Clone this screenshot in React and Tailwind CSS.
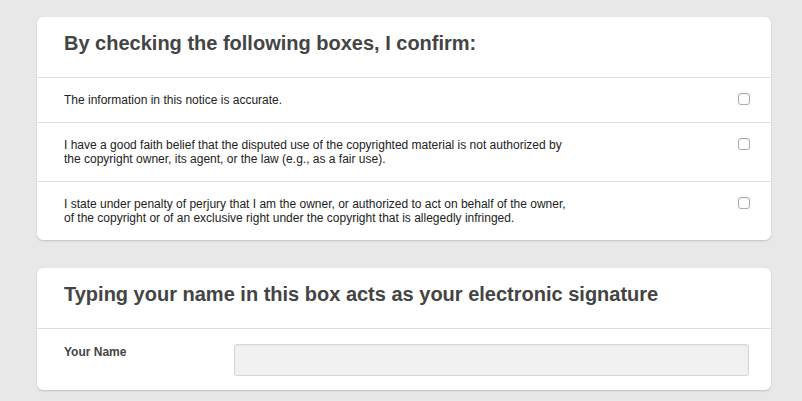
import React from "react";

const rows = [
  ["The information in this notice is accurate."],
  [
    "I have a good faith belief that the disputed use of the copyrighted material is not authorized by",
    "the copyright owner, its agent, or the law (e.g., as a fair use).",
  ],
  [
    "I state under penalty of perjury that I am the owner, or authorized to act on behalf of the owner,",
    "of the copyright or of an exclusive right under the copyright that is allegedly infringed.",
  ],
];

function Checkbox() {
  return (
    <span className="block w-[12px] h-[12px] shrink-0 rounded-[3px] border border-[#a9a9a9] bg-white shadow-[inset_0_1px_1px_rgba(0,0,0,0.06)]" />
  );
}

export default function App() {
  return (
    <div
      className="min-h-[401px] bg-[#e8e8e8] pt-[17px] pl-[37px] flex flex-col gap-[28px]"
      style={{ fontFamily: '"Liberation Sans", Arial, Helvetica, sans-serif' }}
    >
      <div className="w-[734px] bg-white rounded-[6px] shadow-[0_1px_2px_rgba(0,0,0,0.18)]">
        <div className="h-[61px] px-[27px] pt-[16px] border-b border-[#dedede]">
          <h2 className="text-[20px] font-bold text-[#444444] leading-[20px]">
            By checking the following boxes, I confirm:
          </h2>
        </div>
        {rows.map((lines, i) => (
          <div
            key={i}
            className={
              "flex items-start justify-between pl-[27px] pr-[21px] py-[15px] " +
              (i < rows.length - 1 ? "border-b border-[#dedede]" : "")
            }
          >
            <p className="text-[12px] leading-[14px] text-[#222222]">
              {lines.map((l, j) => (
                <span key={j} className="block whitespace-nowrap">
                  {l}
                </span>
              ))}
            </p>
            <Checkbox />
          </div>
        ))}
      </div>

      <div className="w-[734px] bg-white rounded-[6px] shadow-[0_1px_2px_rgba(0,0,0,0.18)]">
        <div className="h-[61px] px-[27px] pt-[16px] border-b border-[#dedede]">
          <h2 className="text-[20px] font-bold text-[#444444] leading-[20px]">
            Typing your name in this box acts as your electronic signature
          </h2>
        </div>
        <div className="flex items-start pl-[27px] pr-[22px] pt-[15px] pb-[14px]">
          <label className="w-[170px] pt-[1px] text-[12px] leading-[14px] font-bold text-[#444444]">
            Your Name
          </label>
          <div className="flex-1 h-[32px] rounded-[3px] border border-[#d6d6d6] bg-[#f1f1f1] shadow-[inset_0_1px_2px_rgba(0,0,0,0.05)]" />
        </div>
      </div>
    </div>
  );
}
